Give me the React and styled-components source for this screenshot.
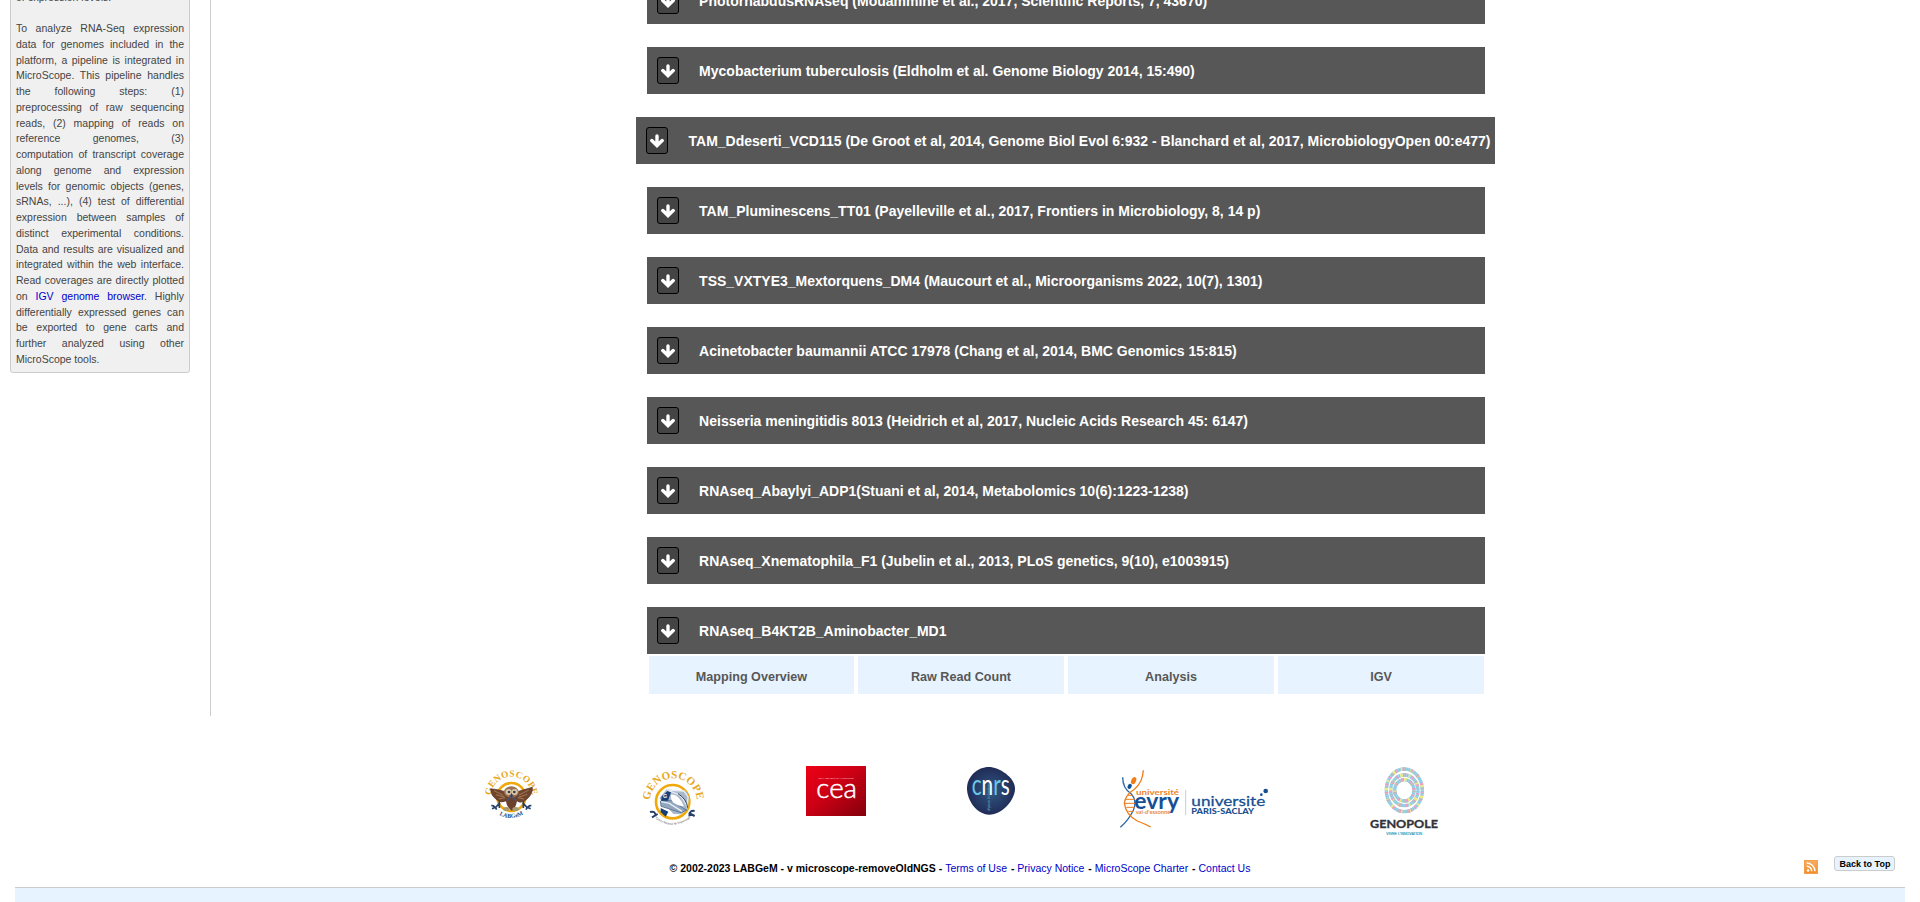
import React from "react";
import styled, { createGlobalStyle } from "styled-components";

const Global = createGlobalStyle`
  * { box-sizing: border-box; }
  body { margin: 0; background: #fff; color: #000; font-family: "Liberation Sans", Arial, sans-serif; }
  a { color: #0000cc; text-decoration: none; }
`;

const Page = styled.div`
  height: 902px;
  overflow: hidden;
  display: flex;
  flex-direction: column;
`;
const Columns = styled.div`
  display: flex;
  height: 716px;
  flex: none;
`;
const Sidebar = styled.aside`
  width: 211px;
  flex: none;
  padding-left: 10px;
  border-right: 1px solid #ccc;
`;
const InfoBox = styled.div`
  width: 180px;
  margin-top: -20px;
  height: 393px;
  padding: 8.65px 5px 0;
  border: 1px solid #ccc;
  border-radius: 3px;
  background: #f0f0f0;
  color: #444;
  font-size: 10.5px;
  line-height: 15.75px;
  text-align: justify;
`;
const Para = styled.p`
  margin: 0 0 15.75px;
`;
const Main = styled.main`
  flex: 1;
  margin-top: -23px;
  display: flex;
  flex-direction: column;
  align-items: center;
  gap: 23px;
`;
const ProjectBar = styled.div`
  min-width: 838px;
  height: 47px;
  flex: none;
  display: flex;
  align-items: center;
  gap: 20.6px;
  padding: 0 4.6px 0 10px;
  background: #575757;
  color: #fff;
  font-size: 14px;
  font-weight: bold;
  white-space: nowrap;
`;
const Toggle = styled.button`
  width: 22px;
  height: 27px;
  padding: 0;
  display: flex;
  align-items: center;
  justify-content: center;
  background: #444;
  color: #fff;
  border: 1px solid #000;
  border-radius: 3px;
`;
const Arrow = styled.svg`
  display: block;
  fill: none;
  stroke: currentColor;
  stroke-width: 3.4px;
  stroke-linecap: round;
`;
const Tabs = styled.nav`
  width: 835px;
  height: 38px;
  margin: -21px 0 0 1px;
  display: grid;
  grid-template-columns: 205px 206px 206px 206px;
  gap: 4px;
`;
const Tab = styled.a`
  display: flex;
  align-items: center;
  justify-content: center;
  padding: 3px 0 0 1px;
  background: #e7f4ff;
  color: #575757;
  font-size: 12.6px;
  font-weight: bold;
`;
const Partners = styled.div`
  height: 74px;
  margin-top: 50px;
  flex: none;
  display: flex;
  align-items: flex-start;
  padding-left: 480px;
`;
const Logo = styled.svg`
  display: block;
  flex: none;
  margin-left: ${(p) => p.$gap || 0}px;
`;
const Footer = styled.footer`
  margin: 0 15px;
  height: 48px;
  flex: none;
  display: grid;
  grid-template-columns: 1fr auto 1fr;
  align-items: start;
  padding-top: 16px;
  border-bottom: 1px solid #ccc;
`;
const Legal = styled.div`
  grid-column: 2;
  padding-top: 5px;
  font-size: 10.5px;
  line-height: 15px;
  font-weight: bold;
  white-space: pre;
`;
const LegalLink = styled.a`
  font-weight: normal;
  &:not(:last-child) { margin-right: 1px; }
`;
const Tools = styled.div`
  display: flex;
  justify-content: flex-end;
  gap: 16px;
  padding-right: 10px;
`;
const TopButton = styled.a`
  width: 61px;
  height: 15px;
  padding-left: 1px;
  border: 1px solid #ccc;
  border-radius: 3px;
  background: #e7f4ff;
  font: bold 9px/14px "Liberation Sans", Arial, sans-serif;
  text-align: center;
  white-space: nowrap;
  && { color: #000; }
`;
const RssIcon = styled.svg`
  margin-top: 4px;
`;
const Band = styled.div`
  flex: 1;
  margin: 0 15px;
  background: #e7f4ff;
`;

const projects = [
  "PhotorhabdusRNAseq (Mouammine et al., 2017, Scientific Reports, 7, 43670)",
  "Mycobacterium tuberculosis (Eldholm et al. Genome Biology 2014, 15:490)",
  "TAM_Ddeserti_VCD115 (De Groot et al, 2014, Genome Biol Evol 6:932 - Blanchard et al, 2017, MicrobiologyOpen 00:e477)",
  "TAM_Pluminescens_TT01 (Payelleville et al., 2017, Frontiers in Microbiology, 8, 14 p)",
  "TSS_VXTYE3_Mextorquens_DM4 (Maucourt et al., Microorganisms 2022, 10(7), 1301)",
  "Acinetobacter baumannii ATCC 17978 (Chang et al, 2014, BMC Genomics 15:815)",
  "Neisseria meningitidis 8013 (Heidrich et al, 2017, Nucleic Acids Research 45: 6147)",
  "RNAseq_Abaylyi_ADP1(Stuani et al, 2014, Metabolomics 10(6):1223-1238)",
  "RNAseq_Xnematophila_F1 (Jubelin et al., 2013, PLoS genetics, 9(10), e1003915)",
  "RNAseq_B4KT2B_Aminobacter_MD1",
];

const SERIF = '"Liberation Serif", serif';

function LabgemLogo() {
  return (
    <Logo width="62" height="74" viewBox="30 48 186 222">
      <defs>
        <path id="labArc" d="M62 142A62 62 0 0 1 186 142" />
        <path id="labBase" d="M84 193Q124 216 164 191" />
      </defs>
      <text fontFamily={SERIF} fontSize="28" fontWeight="bold" fill="#e5a823" letterSpacing=".8" textAnchor="middle">
        <textPath href="#labArc" startOffset="50%">GENOSCOPE</textPath>
      </text>
      <circle cx="124" cy="141" r="42" fill="#fff" stroke="#efa90b" strokeWidth="8" />
      <path d="M66 176l12-5 12-13M64 167q9-2 16 12M182 176l-12-5-12-13M184 167q-9-2-16 12M88 152v22M160 152v22" stroke="#27416f" strokeWidth="5" fill="none" />
      <path d="M62 116Q82 118 106 125Q120 136 142 125Q166 118 187 112Q189 132 170 148Q153 162 142 153Q124 160 106 153Q94 160 80 149Q62 136 62 116Z" fill="#70452c" stroke="#4c2e22" strokeWidth="2" />
      <path d="M72 122l28 14M78 134l25 7M176 120l-29 15M172 133l-25 8M86 147l19-4M162 147l-18-4" stroke="#ba926e" strokeWidth="2" />
      <path d="M111 130h27q9 33-12 53q-25-16-15-53" fill="#6b412c" />
      <ellipse cx="124" cy="126" rx="22" ry="17" fill="#9a7354" />
      <circle cx="116" cy="126" r="9" fill="#d9c8ad" /><circle cx="134" cy="126" r="9" fill="#d9c8ad" />
      <circle cx="117" cy="126" r="4" fill="#403c3c" /><circle cx="133" cy="126" r="4" fill="#403c3c" />
      <path d="M124 129l-4 10 5 5 4-6z" fill="#35405e" /><path d="M121 138l-10 16M129 140l9 12" stroke="#3b568a" strokeWidth="4" />
      <ellipse cx="109" cy="177" rx="10" ry="6" fill="#a99a6d" /><ellipse cx="137" cy="177" rx="10" ry="6" fill="#a99a6d" />
      <text fontFamily={SERIF} fontSize="18" fontWeight="bold" fill="#20467e" textAnchor="middle">
        <textPath href="#labBase" startOffset="50%">LABGeM</textPath>
      </text>
    </Logo>
  );
}

function GenoscopeLogo() {
  return (
    <Logo $gap={96} width="70" height="74" viewBox="504 48 210 222">
      <defs>
        <path id="genArc" d="M539 156A71 71 0 0 1 681 156" />
        <path id="genBase" d="M552 202Q608 247 665 200" />
      </defs>
      <text fontFamily={SERIF} fontSize="33" fontWeight="bold" fill="#e5a823" letterSpacing=".5" textAnchor="middle">
        <textPath href="#genArc" startOffset="50%">GENOSCOPE</textPath>
      </text>
      <path d="M540 186q17-5 17 13M546 202l17-10M674 183q-17-3-16 16M674 198l-18-9" stroke="#27406c" strokeWidth="6" fill="none" />
      <circle cx="608" cy="155" r="50" fill="#fff" stroke="#efa90b" strokeWidth="8" />
      <path d="M568 145L590 118L650 125L656 142L653 177L633 193L610 192Z" fill="#a9b8ca" />
      <path d="M575 139l18-16 10 3-10 29-20-1zM572 174l23 11-8 15-15-14z" fill="#173f78" />
      <path d="M571 153l33-1 38 24 8 4-17 8-60-19z" fill="#92a7be" stroke="#405a80" strokeWidth="2" />
      <path d="M603 134q22-4 39 35q-18 0-33-12q-8-10-6-23" fill="#fff" />
      <path d="M591 120l51 3 12 17-2 31q-14-30-26-37zM573 155l25 5 38 24" stroke="#e6edf5" strokeWidth="4" fill="none" />
      <path d="M624 131q26 16 29 42" stroke="#30435e" strokeWidth="3" fill="none" />
      <text x="579" y="144" fontFamily="Liberation Sans" fontSize="16" fontWeight="bold" fill="#fff">G</text>
      <text fontFamily={SERIF} fontSize="9" fill="#333" textAnchor="middle">
        <textPath href="#genBase" startOffset="50%">Centre National de Séquençage</textPath>
      </text>
    </Logo>
  );
}

function CeaLogo() {
  return (
    <Logo $gap={98} width="60" height="50" viewBox="48 48 180 150">
      <defs>
        <linearGradient id="ceaRed" x2="1" y2="1"><stop stopColor="#ed0016" /><stop offset=".45" stopColor="#cd0015" /><stop offset="1" stopColor="#82000b" /></linearGradient>
        <linearGradient id="ceaLine"><stop stopColor="#62552b" /><stop offset="1" stopColor="#c5a714" /></linearGradient>
      </defs>
      <rect x="48" y="48" width="180" height="150" fill="url(#ceaRed)" />
      <text x="86" y="87" fontFamily="Liberation Sans" fontSize="6" fill="#ffc5cb" textLength="105" lengthAdjust="spacingAndGlyphs">DE LA RECHERCHE À L'INDUSTRIE</text>
      <text x="79" y="145" fontFamily="Lato" fontSize="82" fontWeight="300" fill="#fff" stroke="#fff" strokeWidth="1.6" textLength="122" lengthAdjust="spacingAndGlyphs">cea</text>
      <path d="M86 162H189" stroke="url(#ceaLine)" strokeWidth="6" />
    </Logo>
  );
}

function CnrsLogo() {
  return (
    <Logo $gap={100} width="50" height="50" viewBox="528 48 150 150">
      <defs><radialGradient id="cnrsBlue"><stop stopColor="#315982" /><stop offset="1" stopColor="#202c57" /></radialGradient></defs>
      <path d="M596 51C627 51 675 82 675 116C675 150 636 194 598 194C558 194 531 149 531 115C531 78 564 51 596 51Z" fill="url(#cnrsBlue)" />
      <text x="545" y="135" fontFamily="Lato" fontSize="84" fill="#fff" textLength="114" lengthAdjust="spacingAndGlyphs">
        <tspan fill="#67c7e9">c</tspan>n<tspan fill="#67c7e9">r</tspan>s
      </text>
      <text transform="translate(600 183) rotate(-90)" fontFamily="Liberation Sans" fontSize="11" fill="#65bdde" textLength="83" lengthAdjust="spacingAndGlyphs">dépasser les frontières</text>
    </Logo>
  );
}

function EvryLogo() {
  return (
    <Logo $gap={99} width="160" height="74" viewBox="45 48 480 222">
      <g fill="none" strokeWidth="4">
        <path d="M68 82Q68 116 94 132Q112 151 100 181Q85 212 61 232" stroke="#2c67a1" />
        <path d="M130 61Q128 97 104 117Q76 135 73 159Q77 194 112 213Q136 222 152 231" stroke="#ef7c18" />
        <path d="M83 136h15M77 148h27M75 160h30M79 172h25M85 184h15" stroke="#ef7c18" strokeWidth="3" />
      </g>
      <ellipse cx="101" cy="92" rx="7" ry="11" transform="rotate(25 101 92)" fill="#f27c14" />
      <ellipse cx="89" cy="109" rx="6" ry="8" transform="rotate(30 89 109)" fill="#15509a" />
      <text x="108" y="136" fontFamily="Lato" fontSize="22" fontWeight="bold" fill="#ed832d" textLength="129" lengthAdjust="spacingAndGlyphs">université</text>
      <text x="103" y="178" fontFamily="Lato" fontSize="70" fontWeight="bold" fill="#174f96" textLength="134" lengthAdjust="spacingAndGlyphs">evry</text>
      <text x="107" y="193" fontFamily="Lato" fontSize="14" fontWeight="bold" fill="#e58b41" textLength="104" lengthAdjust="spacingAndGlyphs">val-d'essonne</text>
      <path d="M257 120V195" stroke="#9ab9cf" strokeWidth="2" />
      <text x="274" y="168" fontFamily="Lato" fontSize="40" fill="#174f91" stroke="#174f91" strokeWidth=".8" textLength="222" lengthAdjust="spacingAndGlyphs">universite</text>
      <circle cx="484" cy="134" r="4" fill="#174f91" /><circle cx="497" cy="123" r="7" fill="#174f91" />
      <text x="274" y="193" fontFamily="Lato" fontSize="21" fontWeight="900" fill="#174f91" textLength="188" lengthAdjust="spacingAndGlyphs">PARIS-SACLAY</text>
    </Logo>
  );
}

function GenopoleLogo() {
  const rings = [[29, 32], [41, 46], [54, 64]];
  return (
    <Logo $gap={89} width="80" height="74" viewBox="72 48 240 222">
      <g fill="none" strokeWidth="10">
        {rings.map(([rx, ry], i) => (
          <g key={rx}>
            <ellipse cx="193" cy="121" rx={rx} ry={ry} stroke="#8ccbe2" />
            <ellipse cx="193" cy="121" rx={rx} ry={ry} stroke="#ecea78" strokeDasharray="5 25 8 18" strokeDashoffset={i * 7} />
            <ellipse cx="193" cy="121" rx={rx} ry={ry} stroke="#ec98c0" strokeDasharray="6 21 5 17" strokeDashoffset={13 + i * 5} />
            <ellipse cx="193" cy="121" rx={rx} ry={ry} stroke="#b4b9c2" strokeDasharray="6 36" strokeDashoffset={i * 9} />
            <ellipse cx="193" cy="121" rx={rx} ry={ry} stroke="#fff" strokeOpacity=".45" strokeDasharray="1 5" />
          </g>
        ))}
      </g>
      <text x="90" y="235" fontFamily="Lato" fontSize="36" fontWeight="bold" fill="#333338" stroke="#333338" strokeWidth="1" textLength="204" lengthAdjust="spacingAndGlyphs">GENOPOLE</text>
      <text x="139" y="254" fontFamily="Liberation Sans" fontSize="12" fill="#249dbe" stroke="#249dbe" strokeWidth=".5" textLength="107" lengthAdjust="spacingAndGlyphs">VIVRE L'INNOVATION</text>
    </Logo>
  );
}

export default function App() {
  return (
    <Page>
      <Global />
      <Columns>
        <Sidebar>
          <InfoBox>
            <Para>of expression levels.</Para>
            <Para>
              To analyze RNA-Seq expression data for genomes included in the platform, a pipeline is
              integrated in MicroScope. This pipeline handles the following steps: (1) preprocessing of
              raw sequencing reads, (2) mapping of reads on reference genomes, (3) computation of
              transcript coverage along genome and expression levels for genomic objects (genes, sRNAs,
              ...), (4) test of differential expression between samples of distinct experimental
              conditions. Data and results are visualized and integrated within the web interface. Read
              coverages are directly plotted on <a href="#igv">IGV genome browser</a>. Highly
              differentially expressed genes can be exported to gene carts and further analyzed using
              other MicroScope tools.
            </Para>
          </InfoBox>
        </Sidebar>
        <Main>
          {projects.map((name) => (
            <ProjectBar key={name}>
              <Toggle aria-label="Expand">
                <Arrow width="14" height="14" viewBox="0 0 14 14"><path d="M7 2V11M1.8 6.6L7 11.6L12.2 6.6" /></Arrow>
              </Toggle>
              <span>{name}</span>
            </ProjectBar>
          ))}
          <Tabs>
            <Tab>Mapping Overview</Tab>
            <Tab>Raw Read Count</Tab>
            <Tab>Analysis</Tab>
            <Tab>IGV</Tab>
          </Tabs>
        </Main>
      </Columns>
      <Partners>
        <LabgemLogo />
        <GenoscopeLogo />
        <CeaLogo />
        <CnrsLogo />
        <EvryLogo />
        <GenopoleLogo />
      </Partners>
      <Footer>
        <Legal>
          {"© 2002-2023 LABGeM - v microscope-removeOldNGS - "}
          <LegalLink href="#terms">Terms of Use</LegalLink>{" - "}
          <LegalLink href="#privacy">Privacy Notice</LegalLink>{" - "}
          <LegalLink href="#charter">MicroScope Charter</LegalLink>{" - "}
          <LegalLink href="#contact">Contact Us</LegalLink>
        </Legal>
        <Tools>
          <RssIcon width="14" height="14" viewBox="0 0 14 14">
            <defs><linearGradient id="rss" x2="0" y2="1"><stop stopColor="#f8ad62" /><stop offset="1" stopColor="#f58a22" /></linearGradient></defs>
            <rect x=".5" y=".5" width="13" height="13" fill="url(#rss)" stroke="#f3a04e" />
            <circle cx="4" cy="10.5" r="1.3" fill="#fff" />
            <path d="M2.7 6.3a5 5 0 0 1 5 5M2.7 3a8.3 8.3 0 0 1 8.3 8.3" fill="none" stroke="#fff" strokeWidth="1.5" />
          </RssIcon>
          <TopButton href="#top">Back to Top</TopButton>
        </Tools>
      </Footer>
      <Band />
    </Page>
  );
}
